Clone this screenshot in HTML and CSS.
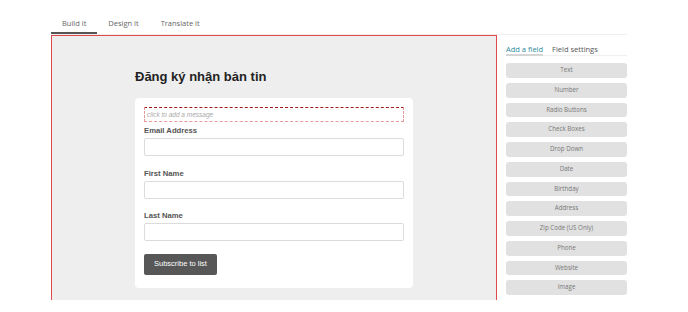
FILE: index.html
```html
<!DOCTYPE html>
<html lang="vi">
<head>
<meta charset="utf-8">
<title>Form builder</title>
<link rel="stylesheet" href="styles.css">
</head>
<body>
<div class="app">
  <nav class="tabs">
    <span class="tab active">Build it</span>
    <span class="tab">Design it</span>
    <span class="tab">Translate it</span>
  </nav>
  <div class="workspace">
    <section class="canvas">
      <div class="form-wrap">
        <h1 class="form-title">Đăng ký nhận bản tin</h1>
        <div class="card">
          <div class="message">click to add a message</div>
          <div class="field first">
            <label class="label">Email Address</label>
            <div class="input"></div>
          </div>
          <div class="field">
            <label class="label">First Name</label>
            <div class="input"></div>
          </div>
          <div class="field">
            <label class="label">Last Name</label>
            <div class="input"></div>
          </div>
          <div class="submit">Subscribe to list</div>
        </div>
      </div>
    </section>
    <aside class="panel">
      <div class="subtabs">
        <span class="subtab active">Add a field</span>
        <span class="subtab">Field settings</span>
      </div>
      <ul class="fields">
        <li>Text</li>
        <li>Number</li>
        <li>Radio Buttons</li>
        <li>Check Boxes</li>
        <li>Drop Down</li>
        <li>Date</li>
        <li>Birthday</li>
        <li>Address</li>
        <li>Zip Code (US Only)</li>
        <li>Phone</li>
        <li>Website</li>
        <li>Image</li>
      </ul>
    </aside>
  </div>
</div>
</body>
</html>
```

FILE: styles.css
```css
* { box-sizing: border-box; }
html, body { margin: 0; padding: 0; background: #fff; }
body { font-family: "Open Sans", "DejaVu Sans", sans-serif; }

.app {
  margin-left: 51px;
  width: 576px;
}

.tabs {
  display: flex;
  height: 35px;
  border-bottom: 1px solid #eeeeee;
}
.tab {
  padding: 17px 11px 0;
  height: 34px;
  font-size: 7.5px;
  line-height: 12px;
  color: #666;
}
.tab.active {
  border-bottom: 2px solid #555;
}

.workspace {
  display: flex;
  align-items: flex-start;
}

.canvas {
  width: 446px;
  height: 265px;
  background: #eeeeee;
  border: 1px solid #e04a4a;
  border-bottom: none;
  padding-top: 33px;
}
.form-wrap {
  width: 278px;
  margin: 0 auto;
}
.form-title {
  margin: 0 0 13px;
  font-family: "Liberation Sans", Arial, sans-serif;
  font-size: 13px;
  line-height: 16px;
  font-weight: bold;
  color: #222;
}
.card {
  background: #fff;
  border-radius: 4px;
  padding: 9px 9px 13px;
  font-family: "Liberation Sans", Arial, sans-serif;
}
.message {
  height: 15px;
  border-top: 1px dashed #a01818;
  border-bottom: 1px dashed #e89a9a;
  border-left: 1px dashed #e89a9a;
  border-right: 1px dashed #e89a9a;
  font-size: 6.5px;
  line-height: 13px;
  font-style: italic;
  color: #aaa;
  padding-left: 2px;
}
.field { margin-top: 12.5px; }
.field.first { margin-top: 4px; }
.label {
  display: block;
  font-size: 7.7px;
  line-height: 10px;
  font-weight: bold;
  color: #555;
  margin-bottom: 2px;
}
.input {
  height: 18px;
  border: 1px solid #dcdcdc;
  border-radius: 2px;
  background: #fff;
}
.submit {
  display: inline-block;
  margin-top: 13px;
  height: 20.5px;
  padding: 0 10px;
  background: #575757;
  border-radius: 2px;
  color: #fff;
  font-size: 7.5px;
  line-height: 20.5px;
}

.panel {
  width: 130px;
  padding-left: 9px;
}
.subtabs {
  display: flex;
  gap: 9px;
  height: 21px;
  border-bottom: 1px solid #f0f0f0;
}
.subtab {
  padding-top: 8px;
  font-size: 7.5px;
  line-height: 12px;
  color: #555;
}
.subtab.active {
  color: #2a8a9a;
  border-bottom: 2px solid #d5d5d5;
  height: 21px;
}
.fields {
  list-style: none;
  margin: 7px 0 0;
  padding: 0;
}
.fields li {
  height: 14.75px;
  margin-bottom: 5px;
  background: #e1e1e1;
  border-radius: 3px;
  text-align: center;
  font-size: 6.2px;
  line-height: 14.75px;
  color: #777;
}
```
